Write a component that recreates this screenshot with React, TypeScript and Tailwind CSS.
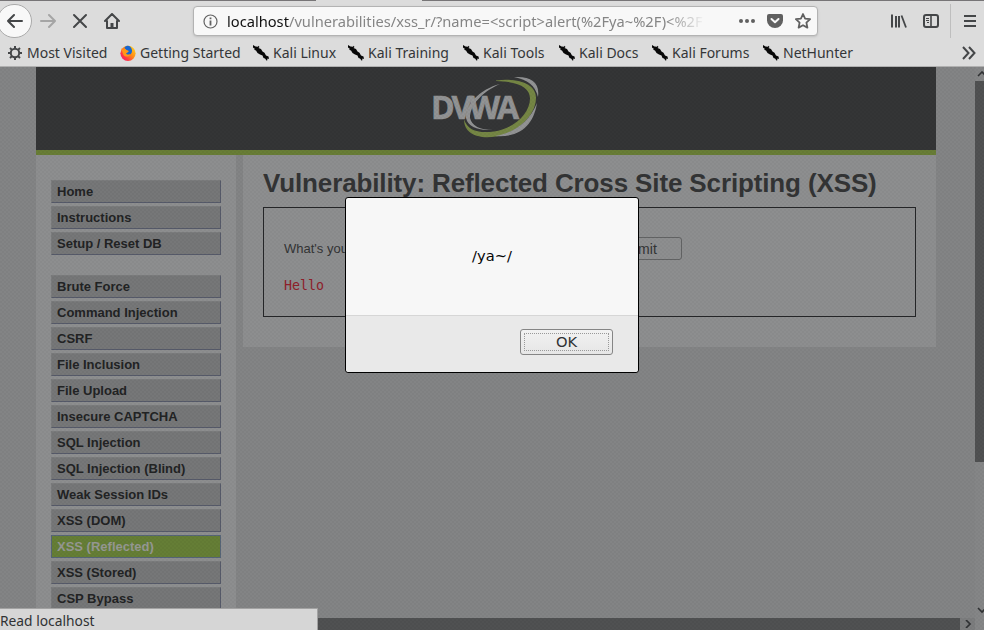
import React from "react";

const Kali = () => (
  <svg className="h-4 w-4 shrink-0" viewBox="0 0 16 16" fill="#080808">
    <path d="M0 0l2.500 1.500L5 1.700 5.500.7 6.500 2l-1 1L8 4l1.500 2.500 2 1.300 1.500 2.700 2.500 1 .5 2.500-1.500-.5-.5 2.500-2-2.500-1.500-.5-1-2.500L7 9.500 4.500 8 3 5.500 1 4.800l1-.8L0 2.500z" />
  </svg>
);

const Gear = () => (
  <svg className="h-4 w-4 shrink-0" viewBox="0 0 16 16" fill="none" stroke="#444648">
    <circle cx="8" cy="8" r="4.200" strokeWidth="2" />
    <path strokeWidth="2" d="M8 1v2.500M8 12.500v2.500M1 8h2.500M12.500 8H15M3 3l1.900 1.900M11.100 11.100L13 13M13 3l-1.900 1.900M4.900 11.100L3 13" />
  </svg>
);

const Firefox = () => (
  <svg className="h-4 w-4 shrink-0" viewBox="0 0 16 16">
    <defs>
      <linearGradient id="fox" x1="1" y1="0" x2="0" y2="1">
        <stop offset="0" stopColor="#ffe226" />
        <stop offset=".45" stopColor="#ff8a16" />
        <stop offset=".75" stopColor="#ff3347" />
        <stop offset="1" stopColor="#e31587" />
      </linearGradient>
    </defs>
    <circle cx="8" cy="8.300" r="7.600" fill="url(#fox)" />
    <path fill="#1767d2" d="M4.500 2.500C6 .5 9 .3 10.500 2c2 2 2 5.500.3 7-2.500 1.800-5.300.5-5.300-2l3-1-3-1.500z" />
    <path fill="#ff9818" d="M1 3l1.500 1.500 3-.5L7 5.500 9 6 7.500 7.500 6 8.500c.5 1.500 2.500 1.500 4.500.5-1 3-5 3.500-7 1z" />
  </svg>
);

const bookmarks = [
  { label: "Kali Linux", w: "w-[95px]" },
  { label: "Kali Training", w: "w-[115px]" },
  { label: "Kali Tools", w: "w-[96px]" },
  { label: "Kali Docs", w: "w-[93px]" },
  { label: "Kali Forums", w: "w-[111px]" },
  { label: "NetHunter", w: "w-[110px]" },
];

const Toolbar = () => (
  <header className="h-[67px] w-full border-b border-[#b0b0b0] bg-[#dcdcdc] text-[#343638]">
    <div className="flex h-px">
      <div className="w-[316px] bg-[#777577]" />
      <div className="w-[106px]" />
      <div className="flex-1 bg-[#777577]" />
    </div>
    <div className="flex h-10 items-center">
      <div className="-ml-[3px] flex h-[34px] w-[35px] shrink-0 items-center justify-center rounded-full border border-[#aaa] bg-[#f8f8f8]">
        <svg className="h-4 w-4" viewBox="0 0 16 16" fill="none" stroke="#444648" strokeWidth="2" strokeLinecap="round" strokeLinejoin="round"><path d="M15 8H1M7 2L1 8l6 6" /></svg>
      </div>
      <svg className="ml-2 h-4 w-4 shrink-0" viewBox="0 0 16 16" fill="none" stroke="#a5a5a5" strokeWidth="2" strokeLinecap="round" strokeLinejoin="round"><path d="M1 8h14M9 2l6 6-6 6" /></svg>
      <svg className="ml-4 h-4 w-4 shrink-0" viewBox="0 0 16 16" fill="none" stroke="#444648" strokeWidth="2" strokeLinecap="round"><path d="M2 2l12 12M14 2L2 14" /></svg>
      <svg className="ml-4 h-4 w-4 shrink-0" viewBox="0 0 16 16" fill="none" stroke="#444648" strokeWidth="2" strokeLinecap="round" strokeLinejoin="round"><path d="M1 8l7-7 7 7M3 8v7h10V8" /><path d="M8 14v-4" strokeWidth="3" strokeLinecap="butt" /></svg>
      <div className="ml-[73px] flex h-[30px] w-[625px] shrink-0 items-center rounded border border-[#b3b3b3] bg-[#f8f8f8] pl-[9px] shadow-sm">
        <svg className="h-[15px] w-[15px] shrink-0" viewBox="0 0 15 15" fill="none" stroke="#626262"><circle cx="7.500" cy="7.500" r="6.500" strokeWidth="1.200" /><path strokeWidth="1.800" d="M7.500 6.500v5M7.500 3.500v1.700" /></svg>
        <div className="ml-[9px] w-[478px] overflow-hidden whitespace-nowrap font-['Noto_Sans',sans-serif] text-[14.667px] leading-6 text-[#858585] [mask-image:linear-gradient(to_right,#000_92%,transparent)]">
          <span className="text-[#111]">localhost</span>/vulnerabilities/xss_r/?name=&lt;script&gt;alert(%2Fya~%2F)&lt;%2F
        </div>
        <svg className="ml-[34px] h-4 w-4 shrink-0" viewBox="0 0 16 16" fill="#606060"><circle cx="2" cy="8" r="2" /><circle cx="8" cy="8" r="2" /><circle cx="14" cy="8" r="2" /></svg>
        <svg className="ml-3 h-4 w-4 shrink-0" viewBox="0 0 16 16"><path fill="#606060" d="M2 1h12q2 0 2 2v4.500a8 7.500 0 0 1-16 0V3q0-2 2-2" /><path d="M4.500 6L8 9.300 11.500 6" fill="none" stroke="#f8f8f8" strokeWidth="2" strokeLinecap="round" strokeLinejoin="round" /></svg>
        <svg className="ml-3 h-4 w-4 shrink-0" viewBox="0 0 16 16" fill="none" stroke="#606060" strokeWidth="1.800" strokeLinejoin="round"><path d="M8 1l2.100 4.600 5 .6-3.700 3.400 1 5L8 12.200 3.600 14.600l1-5L.9 6.200l5-.6z" /></svg>
      </div>
      <svg className="ml-[73px] h-4 w-4 shrink-0" viewBox="0 0 16 16" stroke="#444648" strokeWidth="2"><path d="M1 1.500v13M5 3v11.500M8 3v11.500" /><path d="M10.500 2.500l4.500 12" strokeWidth="1.800" /></svg>
      <svg className="ml-4 h-4 w-4 shrink-0" viewBox="0 0 16 16" fill="none" stroke="#444648"><rect x="1" y="2" width="14" height="12" rx="2" strokeWidth="2" /><path d="M8 2v12" strokeWidth="1.600" /><path d="M3 5.500h3M3 7.500h3M4 9.500h2" /></svg>
      <div className="ml-[11px] h-[34px] w-px shrink-0 bg-[#bebebe]" />
      <svg className="ml-[13px] h-3 w-3 shrink-0" viewBox="0 0 12 12" stroke="#444648" strokeWidth="2"><path d="M0 1h12M0 6h12M0 11h12" /></svg>
    </div>
    <div className="flex h-6 items-center whitespace-nowrap pl-[7px] font-['Noto_Sans',sans-serif] text-[14px] leading-5">
      <div className="flex w-[113px] items-center gap-1"><Gear /><span>Most Visited</span></div>
      <div className="flex w-[133px] items-center gap-1"><Firefox /><span>Getting Started</span></div>
      {bookmarks.map((b) => (
        <div key={b.label} className={`flex shrink-0 items-center gap-1 ${b.w}`}><Kali /><span>{b.label}</span></div>
      ))}
      <svg className="ml-[89px] h-[14px] w-[14px] shrink-0" viewBox="0 0 14 14" fill="none" stroke="#444648" strokeWidth="2"><path d="M1 1l5.500 6L1 13M7 1l5.500 6L7 13" /></svg>
    </div>
  </header>
);

const Logo = () => (
  <svg className="ml-[396px] mt-[9px] h-[62px] w-[108px]" viewBox="432 76 108 62">
    <path fill="#929394" d="M500 84C480 89 465 105 466 118q3 13 27 12-20 0-23-12C470 105 482 92 500 84" />
    <path fill="#758644" d="M496 80.500c23-3 40 4 40 17 0 18-18 35-40 39-18 3-32-3-32-17 4 11 14 14 30 12 20-3 36-18 36-33 0-11-12-17-34-17.500" />
    <path fill="#929394" d="M514 77c17-1 26 5 24 20-3-12-10-17-24-20M537 103c-3 20-15 35-42 33 18-3 34-13 42-33" />
    <text x="431" y="118.500" fill="#929394" fontFamily="Open Sans, sans-serif" fontWeight="700" fontSize="32" textLength="88" lengthAdjust="spacing" stroke="#929394" strokeWidth=".6">DVWA</text>
  </svg>
);

const menu = [
  ["Home", "Instructions", "Setup / Reset DB"],
  ["Brute Force", "Command Injection", "CSRF", "File Inclusion", "File Upload", "Insecure CAPTCHA", "SQL Injection", "SQL Injection (Blind)", "Weak Session IDs", "XSS (DOM)", "XSS (Reflected)", "XSS (Stored)", "CSP Bypass"],
];

const Page = () => (
  <div className="relative flex h-[563px] overflow-hidden bg-[#838485]">
    <div className="flex h-full w-[975px] flex-col">
      <div className="ml-9 flex h-[551px] w-[900px] flex-col overflow-hidden">
        <div className="h-[88px] shrink-0 border-b-[5px] border-[#687d36] bg-[#343536]"><Logo /></div>
        <div className="flex h-[463px] shrink-0">
          <nav className="flex w-[200px] shrink-0 flex-col gap-5 bg-[#8d8e8f] pl-[15px] pt-[25px]">
            {menu.map((group, i) => (
              <div key={i} className="flex flex-col gap-[3px]">
                {group.map((item) => (
                  <div key={item} className={`h-[23px] w-[170px] shrink-0 border pl-[5px] font-['Liberation_Sans',Arial,sans-serif] text-[13px] font-bold leading-[21px] ${item === "XSS (Reflected)" ? "border-[#566577] bg-[#657e36] text-[#969893]" : "border-b-[#565a69] border-l-[#7b7c7d] border-r-[#565a69] border-t-[#7b7c7d] bg-[#767778] text-[#222324]"}`}>{item}</div>
                ))}
              </div>
            ))}
          </nav>
          <main className="ml-[7px] h-[192px] w-[693px] bg-[#8d8e8f] pl-5 pt-3 font-['Liberation_Sans',Arial,sans-serif] text-[#333435]">
            <h1 className="h-10 whitespace-nowrap text-[26px] font-bold leading-8 tracking-[-0.130px]">Vulnerability: Reflected Cross Site Scripting (XSS)</h1>
            <section className="h-[110px] w-[653px] border border-[#252628] px-5 pt-[29px]">
              <div className="flex h-[23px] items-center whitespace-nowrap text-[13px] leading-5">
                <span className="w-[115px] shrink-0">What's your name?</span>
                <span className="h-[23px] w-[184px] shrink-0 border border-[#666]" />
                <button className="ml-[10px] h-[23px] w-[89px] shrink-0 rounded-[3px] border border-[#626364] pr-[5px] text-[14px] leading-5">Submit</button>
              </div>
              <pre className="mt-[18px] font-['DejaVu_Sans_Mono',monospace] text-[13.300px] leading-4 text-[#8f202a]">Hello</pre>
            </section>
          </main>
        </div>
      </div>
      <footer className="flex h-3 bg-[#505152]">
        <div className="ml-auto flex h-3 w-[15px] items-center justify-center bg-[#7c7d7e]"><svg className="h-2 w-2" viewBox="0 0 8 8" fill="none" stroke="#303234" strokeWidth="1.700"><path d="M2 0l4 4-4 4" /></svg></div>
      </footer>
    </div>
    <aside className="flex w-[9px] flex-col overflow-hidden bg-[#858687]">
      <svg className="ml-[2px] mt-1 h-[10px] w-[10px] shrink-0" viewBox="0 0 10 10" fill="none" stroke="#303234" strokeWidth="1.600"><path d="M1 5l4-4 4 4" /></svg>
      <div className="h-[381px] shrink-0 bg-[#505152]" />
      <svg className="ml-[2px] mt-[144px] h-2 w-[10px] shrink-0" viewBox="0 0 10 8" fill="none" stroke="#303234" strokeWidth="1.600"><path d="M1 2l4 4 4-4" /></svg>
    </aside>
    {/* fine dotted texture of the modal backdrop */}
    <div className="pointer-events-none absolute inset-0 bg-[conic-gradient(rgba(0,0,0,0.03)_25%,transparent_0_50%,rgba(0,0,0,0.03)_0_75%,transparent_0)] bg-size-[4px_4px]" />
  </div>
);

const Alert = () => (
  <div className="absolute left-[345px] top-[197px] flex h-[176px] w-[294px] flex-col rounded-[3px] border border-black bg-[#f7f7f7] font-['DejaVu_Sans',sans-serif]">
    <div className="flex h-[117px] items-center justify-center pb-px text-[14.667px] text-[#050505]">/ya~/</div>
    <div className="flex flex-1 justify-end rounded-b-sm border-t border-[#d6d6d6] bg-[#e9e9e9] pr-[25px] pt-[13px]">
      <button className="h-[26px] w-[93px] rounded-[3px] border border-[#858585] bg-linear-to-b from-[#f2f2f2] to-[#e6e6e6] p-[3px] text-[14.667px] text-[#303234]">
        <span className="flex h-full items-center justify-center border border-dotted border-[#999] pb-px">OK</span>
      </button>
    </div>
  </div>
);

export default function App() {
  return (
    <div className="relative h-[630px] w-[984px] overflow-hidden bg-[#828384]">
      <Toolbar />
      <Page />
      <div className="absolute bottom-0 left-0 h-[22px] w-[318px] border-r border-t border-[#a2a2a2] bg-[#d6d6d6] font-['Noto_Sans',sans-serif] text-[13.800px] leading-6 text-[#303234]">Read localhost</div>
      <Alert />
    </div>
  );
}
